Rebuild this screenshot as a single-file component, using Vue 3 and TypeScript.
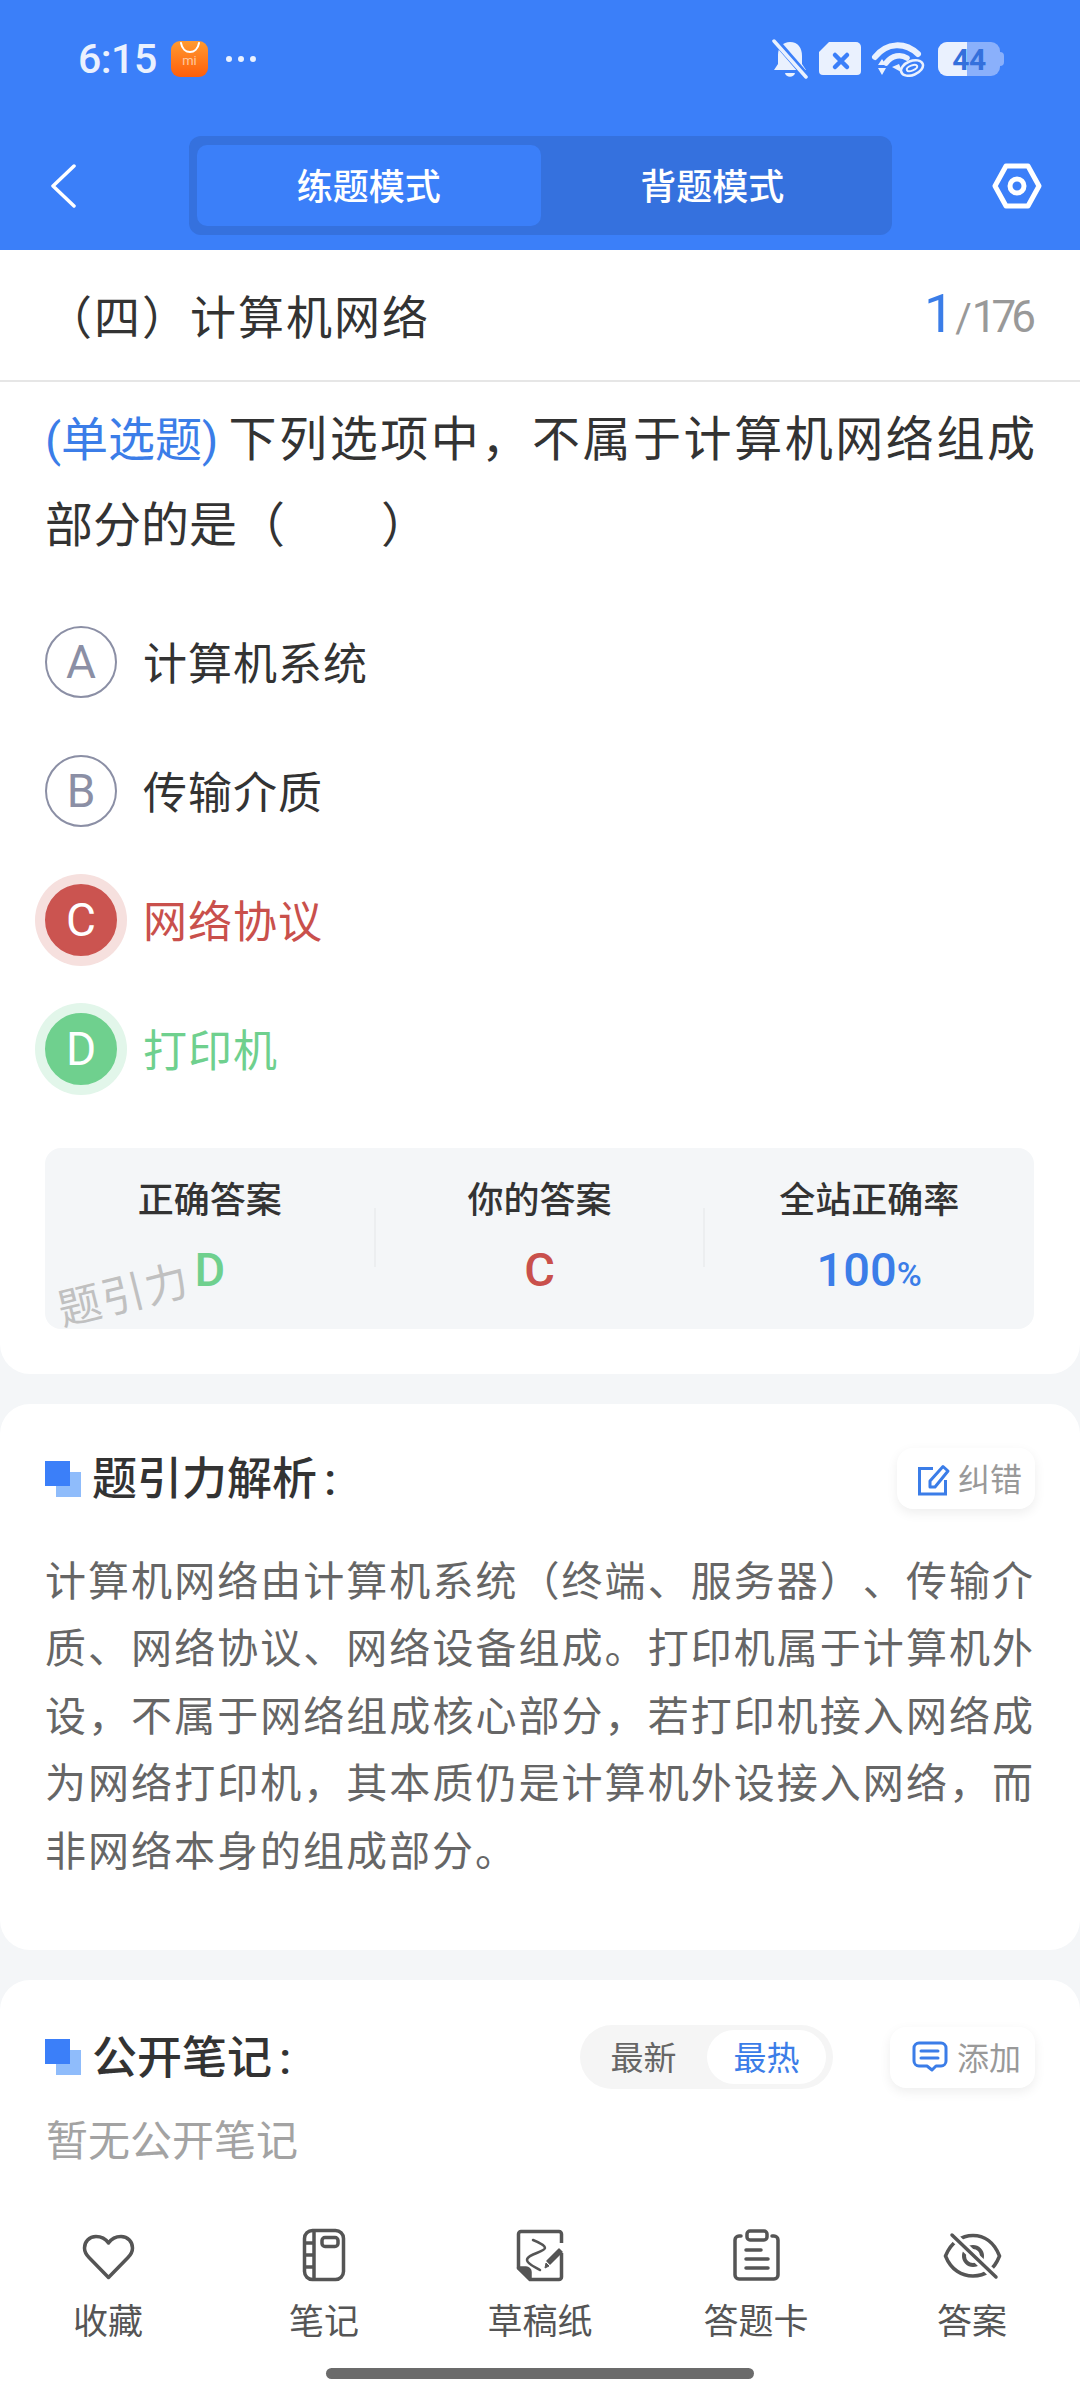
<template>
  <div class="page">
    <!-- 顶部蓝色区域 -->
    <header class="top">
      <div class="status">
        <span class="time">6:15</span>
        <div class="mi-icon">
          <svg width="24" height="14" viewBox="0 0 24 14"><path d="M3 2c1 6 5 9 9 9s8-3 9-9" fill="none" stroke="#fff" stroke-width="2" stroke-linecap="round" /></svg>
          <span>mi</span>
        </div>
        <svg class="dots" width="32" height="8" viewBox="0 0 32 8"><circle cx="4" cy="4" r="3" /><circle cx="16" cy="4" r="3" /><circle cx="28" cy="4" r="3" /></svg>
        <div class="status-right">
          <svg width="38" height="40" viewBox="0 0 38 40">
            <path d="M19 3c8 0 12 6 12 14v8l4 6H3l4-6v-9C7 8 12 3 19 3z" fill="#eaf1fe" />
            <path d="M14 34h10c-1 5-9 5-10 0z" fill="#eaf1fe" />
            <path d="M3 0l33 38" stroke="#3b7ff9" stroke-width="7" />
            <path d="M3 2l32 36" stroke="#eaf1fe" stroke-width="3.5" stroke-linecap="round" />
          </svg>
          <svg width="44" height="34" viewBox="0 0 44 34">
            <path d="M11 0h27a5 5 0 0 1 5 5v24a4 4 0 0 1-4 4H5a4 4 0 0 1-4-4V10z" fill="#eaf1fe" />
            <path d="M17 13l12 12M29 13L17 25" stroke="#3b7ff9" stroke-width="4.5" stroke-linecap="round" />
          </svg>
          <svg width="54" height="36" viewBox="0 0 54 36" fill="none">
            <path d="M4 16C16 1 34 1 47 13" stroke="#eaf1fe" stroke-width="6" stroke-linecap="round" />
            <path d="M15 22c6-8 15-9 21-5" stroke="#eaf1fe" stroke-width="5.5" stroke-linecap="round" />
            <path d="M21 26l7-3 4 9z" fill="#eaf1fe" />
            <path d="M11 18l-4 6h8zM7 27h8l-4 7z" fill="#eaf1fe" />
            <ellipse cx="41" cy="27" rx="11.5" ry="7" transform="rotate(-22 41 27)" stroke="#eaf1fe" stroke-width="2.5" />
            <ellipse cx="41" cy="27" rx="5.5" ry="2.5" transform="rotate(-22 41 27)" stroke="#eaf1fe" stroke-width="2" />
          </svg>
          <div class="battery">
            <div class="battery-fill"></div>
            <span>44</span>
          </div>
        </div>
      </div>
      <nav class="nav">
        <svg class="back" width="26" height="46" viewBox="0 0 26 46" fill="none"><path d="M24 3L3 23l21 20" stroke="#fff" stroke-width="3.5" stroke-linecap="round" stroke-linejoin="round" /></svg>
        <div class="tabs">
          <div v-for="(tab, i) in tabs" :key="tab" :class="['tab', { active: i === 0 }]"><span>{{ tab }}</span></div>
        </div>
        <svg class="setting" width="50" height="46" viewBox="0 0 50 46" fill="none" stroke="#fff" stroke-width="5" stroke-linejoin="round">
          <path d="M3 23L14 3h22l11 20-11 20H14z" />
          <circle cx="25" cy="23" r="7" />
        </svg>
      </nav>
    </header>

    <main class="content">
      <section class="card question-card">
        <div class="chapter">
          <span class="chapter-name">（四）计算机网络</span>
          <span class="progress"><b>1</b><i>/</i><em>176</em></span>
        </div>
        <div class="question">
          <p class="q-first"><span class="q-type">(单选题)</span>下列选项中，不属于计算机网络组成</p>
          <p>部分的是（　　）</p>
        </div>

        <ul class="options">
          <li v-for="opt in options" :key="opt.key" :class="['option', opt.state]">
            <span class="circle">{{ opt.key }}</span>
            <span class="option-text">{{ opt.text }}</span>
          </li>
        </ul>

        <div class="stats">
          <div v-for="s in stats" :key="s.label" class="stat">
            <span class="stat-label">{{ s.label }}</span>
            <span :class="['stat-value', s.cls]">{{ s.value }}<small v-if="s.unit">{{ s.unit }}</small></span>
          </div>
          <span class="watermark">题引力</span>
        </div>
      </section>

      <section class="card analysis-card">
        <div class="section-head">
          <svg class="mark" width="36" height="36" viewBox="0 0 36 36"><rect x="11" y="11" width="25" height="25" fill="#8fbcfb" /><rect width="25" height="25" fill="#3b7ff9" /></svg>
          <h2>题引力解析 :</h2>
          <div class="mini-btn">
            <svg width="34" height="34" viewBox="0 0 34 34" fill="none" stroke="#3b7de8" stroke-width="3">
              <path d="M16 6.5H2.5v25.5h26V18" />
              <path d="M13 25v-6L26 4.500l5 4.500-13 16z" stroke-linejoin="round" />
            </svg>
            <span>纠错</span>
          </div>
        </div>
        <p class="analysis">计算机网络由计算机系统（终端、服务器）、传输介质、网络协议、网络设备组成。打印机属于计算机外设，不属于网络组成核心部分，若打印机接入网络成为网络打印机，其本质仍是计算机外设接入网络，而非网络本身的组成部分。</p>
      </section>

      <section class="card notes-card">
        <div class="section-head">
          <svg class="mark" width="36" height="36" viewBox="0 0 36 36"><rect x="11" y="11" width="25" height="25" fill="#8fbcfb" /><rect width="25" height="25" fill="#3b7ff9" /></svg>
          <h2>公开笔记 :</h2>
          <div class="sort">
            <span>最新</span>
            <span class="on">最热</span>
          </div>
          <div class="mini-btn add-btn">
            <svg width="36" height="32" viewBox="0 0 36 32" fill="none" stroke="#3b7de8" stroke-width="3" stroke-linejoin="round">
              <path d="M7 2h22a5 5 0 0 1 5 5v13a5 5 0 0 1-5 5h-5l-4 4-5-4H7a5 5 0 0 1-5-5V7a5 5 0 0 1 5-5z" />
              <path d="M9 10h17M9 17h17" stroke-linecap="round" />
            </svg>
            <span>添加</span>
          </div>
        </div>
        <p class="empty">暂无公开笔记</p>
      </section>
    </main>

    <!-- 底部工具栏 -->
    <footer class="toolbar">
      <div class="tools">
        <div class="tool">
          <svg width="60" height="56" viewBox="0 0 60 56" fill="none" stroke="#555" stroke-width="3.500" stroke-linejoin="round">
            <path d="M30.500 15C27 10 22 8.500 18 8.500 11 8.500 6.500 14 6.500 20c0 4 2 7 4.500 9.500l19.500 20 19.500-20c2.500-2.500 4.500-5.500 4.500-9.500 0-6-4.500-11.500-11.500-11.500-4 0-9 1.500-12.500 6.500z" />
          </svg>
          <span>收藏</span>
        </div>
        <div class="tool">
          <svg width="60" height="56" viewBox="0 0 60 56" fill="none" stroke="#555" stroke-width="3.500">
            <rect x="10.500" y="2.500" width="39" height="49" rx="8" />
            <path d="M20 3v48M11 15h9M11 27h9M11 39h9" />
            <rect x="28" y="9.500" width="16" height="9" rx="3" />
          </svg>
          <span>笔记</span>
        </div>
        <div class="tool">
          <svg width="60" height="56" viewBox="0 0 60 56" fill="none" stroke="#555" stroke-width="3.500" stroke-linejoin="round">
            <path d="M51.500 15V6a2.500 2.500 0 0 0-2.500-2.500H11A2.500 2.500 0 0 0 8.500 6v34L20 51.500h29a2.500 2.500 0 0 0 2.500-2.500V25" />
            <path d="M8.500 40H16a4 4 0 0 1 4 4v7z" fill="#555" />
            <path d="M23 12c5 2 12 5 12 8 0 4-18 6-18 12 0 4 8 7 13 10" stroke-width="2.500" stroke-linecap="round" />
            <path d="M37 33l12-12 3 3-12 12z" fill="#555" stroke-width="1.500" />
            <path d="M35 40l1-5 3 3z" fill="#555" stroke-width="1" />
          </svg>
          <span>草稿纸</span>
        </div>
        <div class="tool">
          <svg width="60" height="56" viewBox="0 0 60 56" fill="none" stroke="#555" stroke-width="3.500" stroke-linecap="round">
            <path d="M15 8h-2a4 4 0 0 0-4 4v35a4 4 0 0 0 4 4h35a4 4 0 0 0 4-4V12a4 4 0 0 0-4-4h-2" />
            <rect x="21" y="3" width="20" height="9" rx="3" />
            <path d="M20 22h15M20 31h22M20 40h22" />
          </svg>
          <span>答题卡</span>
        </div>
        <div class="tool">
          <svg width="60" height="56" viewBox="0 0 60 56" fill="none" stroke="#555" stroke-width="3.500" stroke-linecap="round">
            <path d="M3.500 28C9 14 20 7.500 31 7.500S52 14 57.500 28C52 42 42 48 31 48S9 42 3.500 28z" />
            <circle cx="31" cy="28" r="9" stroke-width="4" />
            <path d="M10 7l44 42" stroke="#fff" stroke-width="9" />
            <path d="M10 7l44 42" />
          </svg>
          <span>答案</span>
        </div>
      </div>
      <div class="home-bar"></div>
    </footer>
  </div>
</template>

<script setup lang="ts">
interface Option {
  key: string
  text: string
  state?: 'wrong' | 'right'
}

interface Stat {
  label: string
  value: string
  unit?: string
  cls: string
}

const tabs = ['练题模式', '背题模式']

const options: Option[] = [
  { key: 'A', text: '计算机系统' },
  { key: 'B', text: '传输介质' },
  { key: 'C', text: '网络协议', state: 'wrong' },
  { key: 'D', text: '打印机', state: 'right' }
]

const stats: Stat[] = [
  { label: '正确答案', value: 'D', cls: 'green' },
  { label: '你的答案', value: 'C', cls: 'red' },
  { label: '全站正确率', value: '100', unit: '%', cls: 'blue' }
]
</script>

<style>
html,
body {
  margin: 0;
  background: #f4f6f8;
}
</style>

<style scoped>
.page {
  width: 1080px;
  height: 2400px;
  display: flex;
  flex-direction: column;
  overflow: hidden;
  background: #f4f6f8;
  font-family: Roboto, "Noto Sans CJK SC", sans-serif;
  color: #333;
  text-spacing-trim: space-all;
}

.top {
  height: 250px;
  background: #3b7ff9;
  flex-shrink: 0;
}

.status {
  height: 118px;
  display: flex;
  align-items: center;
  padding: 0 80px 0 78px;
  color: #eaf1fe;
}

.time {
  font-size: 41px;
  font-weight: 500;
  width: 93px;
  letter-spacing: -0.5px;
}

.mi-icon {
  width: 37px;
  height: 36px;
  border-radius: 9px;
  background: linear-gradient(180deg, #ff9a30, #ff5e0a);
  display: flex;
  flex-direction: column;
  align-items: center;
  line-height: 12px;
  font-size: 13px;
  color: #ffc9a0;
}

.dots {
  margin-left: 17px;
  fill: #eaf1fe;
}

.status-right {
  margin-left: auto;
  display: flex;
  align-items: center;
  gap: 9px;
}

.battery {
  width: 62px;
  height: 34px;
  margin-left: 4px;
  border-radius: 9px;
  background: #8ab0fb;
  position: relative;
  display: flex;
  align-items: center;
  justify-content: center;
}

.battery::after {
  content: "";
  position: absolute;
  right: -4px;
  top: 10px;
  width: 4px;
  height: 14px;
  border-radius: 0 4px 4px 0;
  background: #8ab0fb;
}

.battery-fill {
  position: absolute;
  left: 0;
  top: 0;
  bottom: 0;
  width: 29px;
  border-radius: 9px 0 0 9px;
  background: #eaf1fe;
}

.battery span {
  position: relative;
  font-size: 30px;
  font-weight: 700;
  color: #3470dc;
  letter-spacing: -0.5px;
}

.nav {
  display: flex;
  align-items: center;
  margin-top: 18px;
  padding-left: 50px;
}

.back {
  width: 26px;
}

.tabs {
  margin-left: 113px;
  width: 703px;
  height: 99px;
  box-sizing: border-box;
  padding: 9px 8px;
  border-radius: 12px;
  background: #3571de;
  display: flex;
}

.tab {
  flex: 1;
  display: flex;
  align-items: center;
  justify-content: center;
  padding-bottom: 3px;
  box-sizing: border-box;
  border-radius: 10px;
  color: #fff;
  font-size: 36px;
  font-weight: 500;
}

.tab.active {
  background: #3b7ff9;
}

.setting {
  margin-left: 100px;
}

.content {
  flex: 1;
  min-height: 0;
  display: flex;
  flex-direction: column;
  gap: 30px;
}

.card {
  background: #fff;
  border-radius: 30px;
}

.question-card {
  height: 1124px;
  flex-shrink: 0;
  box-sizing: border-box;
  border-radius: 0 0 30px 30px;
}

.chapter {
  height: 132px;
  box-sizing: border-box;
  border-bottom: 2px solid #e6e6e6;
  display: flex;
  align-items: center;
  justify-content: space-between;
  padding: 0 45px 3px 46px;
}

.chapter-name {
  font-size: 46px;
  letter-spacing: 2px;
  color: #333;
}

.progress {
  display: flex;
  align-items: baseline;
  font-size: 44px;
  color: #999;
}

.progress b {
  font-size: 54px;
  font-weight: 400;
  color: #3b7de8;
}

.progress i {
  font-style: normal;
  font-size: 40px;
  margin: 0 0 0 1px;
}

.progress em {
  font-style: normal;
  letter-spacing: -5px;
  margin-right: 4px;
}

.question {
  margin: 15px 45px 0;
  font-size: 48px;
  line-height: 86px;
  color: #333;
}

.question p {
  margin: 0;
}

.q-first {
  text-align: justify;
  text-align-last: justify;
}

.q-type {
  display: inline-block;
  width: 181px;
  font-size: 47px;
  text-align-last: left;
  color: #3b7de8;
}

.options {
  list-style: none;
  margin: 57px 0 0;
  padding: 0 45px;
  display: flex;
  flex-direction: column;
  gap: 57px;
}

.option {
  display: flex;
  align-items: center;
  height: 72px;
}

.circle {
  width: 72px;
  height: 72px;
  box-sizing: border-box;
  border-radius: 50%;
  border: 2px solid #8b8fa5;
  color: #8b8fa5;
  font-size: 46px;
  display: flex;
  align-items: center;
  justify-content: center;
  flex-shrink: 0;
}

.option-text {
  margin: 0 0 3px 26px;
  font-size: 44px;
  letter-spacing: 1px;
  color: #333;
}

.option.wrong .circle {
  background: #cb5450;
  border-color: #cb5450;
  color: #fff;
  box-shadow: 0 0 0 10px #f6e0de;
}

.option.wrong .option-text {
  color: #c9504c;
}

.option.right .circle {
  background: #6fd08e;
  border-color: #6fd08e;
  color: #fff;
  box-shadow: 0 0 0 10px #e2f6ea;
}

.option.right .option-text {
  color: #6fd08e;
}

.stats {
  margin: 63px 46px 0 45px;
  height: 181px;
  border-radius: 16px;
  background: #f4f6f8;
  display: flex;
  position: relative;
}

.stat {
  flex: 1;
  display: flex;
  flex-direction: column;
  align-items: center;
  position: relative;
}

.stat + .stat::before {
  content: "";
  position: absolute;
  left: -1px;
  top: 60px;
  height: 59px;
  width: 2px;
  background: #eceef0;
}

.stat-label {
  margin-top: 33px;
  font-size: 36px;
  line-height: 40px;
  font-weight: 500;
  color: #333;
}

.stat-value {
  margin-top: 24px;
  font-size: 47px;
  line-height: 50px;
  font-weight: 500;
}

.stat-value small {
  font-size: 34px;
}

.green {
  color: #6fd08e;
}

.red {
  color: #c9504c;
}

.blue {
  color: #3b7de8;
}

.watermark {
  position: absolute;
  left: 12px;
  top: 122px;
  font-size: 43px;
  line-height: 50px;
  letter-spacing: 1.5px;
  color: #c0c0c0;
  transform: rotate(-14deg);
}

.analysis-card {
  height: 546px;
  flex-shrink: 0;
  box-sizing: border-box;
  padding: 44px 45px 0;
}

.section-head {
  display: flex;
  align-items: center;
  height: 61px;
}

.mark {
  flex-shrink: 0;
}

.section-head h2 {
  margin: 2px 0 0 11px;
  flex: 1;
  font-size: 45px;
  line-height: 61px;
  font-weight: 500;
  word-spacing: -4px;
  color: #333;
}

.mini-btn {
  width: 138px;
  height: 61px;
  box-sizing: border-box;
  padding-left: 20px;
  border-radius: 16px;
  background: #fff;
  box-shadow: 0 4px 12px rgba(0, 0, 0, 0.07);
  display: flex;
  align-items: center;
  gap: 7px;
  font-size: 32px;
  color: #999;
}

.mini-btn span {
  margin-bottom: 3px;
}

.analysis {
  margin: 40px 0 0;
  font-size: 41px;
  line-height: 67.400px;
  letter-spacing: 2px;
  text-align: justify;
  color: #666;
}

.notes-card {
  flex: 1;
  box-sizing: border-box;
  padding: 45px 45px 0;
  border-radius: 30px 30px 0 0;
}

.notes-card .section-head {
  height: 64px;
}

.sort {
  width: 253px;
  height: 64px;
  box-sizing: border-box;
  padding: 5px 7px 5px 0;
  border-radius: 32px;
  background: #f5f5f5;
  display: flex;
  font-size: 33px;
  color: #666;
}

.sort span {
  display: flex;
  align-items: center;
  justify-content: center;
  padding-bottom: 3px;
  box-sizing: border-box;
  border-radius: 27px;
  width: 127px;
}

.sort .on {
  width: 119px;
  background: #fff;
  color: #3b7de8;
}

.add-btn {
  width: 145px;
  margin-left: 57px;
  padding-left: 22px;
  gap: 9px;
}

.empty {
  margin: 23px 0 0 1px;
  font-size: 42px;
  line-height: 60px;
  color: #a3a3a3;
}

.toolbar {
  height: 200px;
  flex-shrink: 0;
  background: #fff;
  box-sizing: border-box;
  padding-top: 28px;
  display: flex;
  flex-direction: column;
  align-items: center;
}

.tools {
  width: 100%;
  display: flex;
}

.tool {
  flex: 1;
  display: flex;
  flex-direction: column;
  align-items: center;
  font-size: 35px;
  line-height: 40px;
  color: #555;
}

.tool span {
  margin-top: 19px;
}

.home-bar {
  width: 428px;
  height: 11px;
  margin-top: 25px;
  border-radius: 6px;
  background: #6b6b6b;
}
</style>
